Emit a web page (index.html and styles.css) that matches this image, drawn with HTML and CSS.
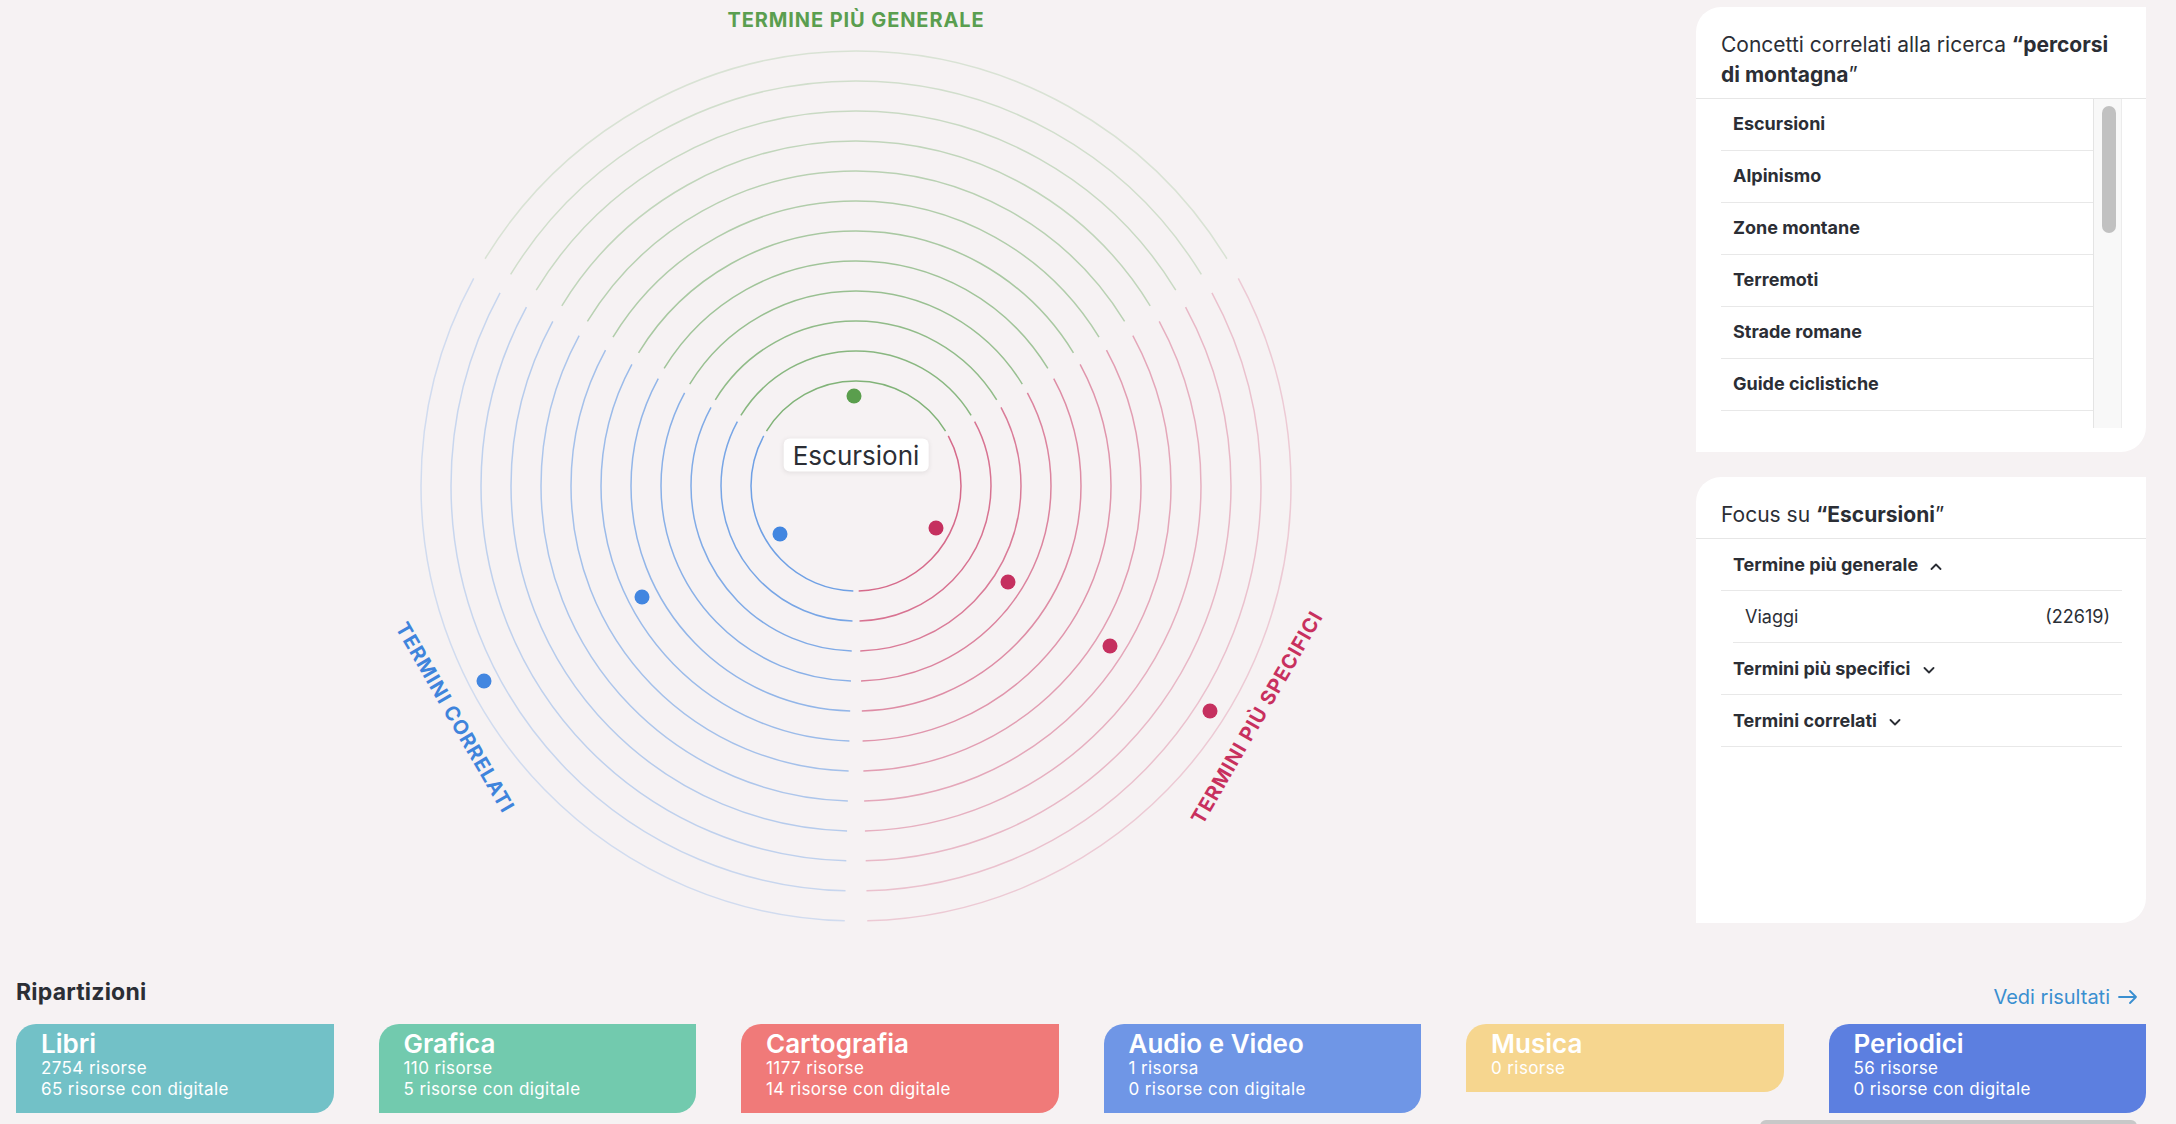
FILE: index.html
```html
<!DOCTYPE html>
<html lang="it">
<head>
    <meta charset="UTF-8">
    <meta name="viewport" content="width=device-width, initial-scale=1.0">
    <title>Esplora concetti</title>
    <link rel="stylesheet" href="styles.css">
</head>
<body>
    <main class="explorer">
        <div class="chart">
            <svg class="chart-svg" viewBox="-500 -486 1000 923" width="1000" height="923">
                <defs>
                    <radialGradient id="fadeGreen" gradientUnits="userSpaceOnUse" cx="0" cy="0" r="440">
                        <stop offset="0.24" stop-color="#5a9e4f" stop-opacity="0.75"/>
                        <stop offset="1" stop-color="#5a9e4f" stop-opacity="0.18"/>
                    </radialGradient>
                    <radialGradient id="fadeRed" gradientUnits="userSpaceOnUse" cx="0" cy="0" r="440">
                        <stop offset="0.24" stop-color="#c8305e" stop-opacity="0.7"/>
                        <stop offset="1" stop-color="#c8305e" stop-opacity="0.2"/>
                    </radialGradient>
                    <radialGradient id="fadeBlue" gradientUnits="userSpaceOnUse" cx="0" cy="0" r="440">
                        <stop offset="0.24" stop-color="#4285e0" stop-opacity="0.75"/>
                        <stop offset="1" stop-color="#4285e0" stop-opacity="0.2"/>
                    </radialGradient>
                </defs>

                <!-- termine più generale -->
                <g class="arcs arcs-green">
                    <circle r="105" pathLength="360"/>
                    <circle r="135" pathLength="360"/>
                    <circle r="165" pathLength="360"/>
                    <circle r="195" pathLength="360"/>
                    <circle r="225" pathLength="360"/>
                    <circle r="255" pathLength="360"/>
                    <circle r="285" pathLength="360"/>
                    <circle r="315" pathLength="360"/>
                    <circle r="345" pathLength="360"/>
                    <circle r="375" pathLength="360"/>
                    <circle r="405" pathLength="360"/>
                    <circle r="435" pathLength="360"/>
                </g>

                <!-- termini più specifici -->
                <g class="arcs arcs-red">
                    <circle r="105" pathLength="360"/>
                    <circle r="135" pathLength="360"/>
                    <circle r="165" pathLength="360"/>
                    <circle r="195" pathLength="360"/>
                    <circle r="225" pathLength="360"/>
                    <circle r="255" pathLength="360"/>
                    <circle r="285" pathLength="360"/>
                    <circle r="315" pathLength="360"/>
                    <circle r="345" pathLength="360"/>
                    <circle r="375" pathLength="360"/>
                    <circle r="405" pathLength="360"/>
                    <circle r="435" pathLength="360"/>
                </g>

                <!-- termini correlati -->
                <g class="arcs arcs-blue">
                    <circle r="105" pathLength="360"/>
                    <circle r="135" pathLength="360"/>
                    <circle r="165" pathLength="360"/>
                    <circle r="195" pathLength="360"/>
                    <circle r="225" pathLength="360"/>
                    <circle r="255" pathLength="360"/>
                    <circle r="285" pathLength="360"/>
                    <circle r="315" pathLength="360"/>
                    <circle r="345" pathLength="360"/>
                    <circle r="375" pathLength="360"/>
                    <circle r="405" pathLength="360"/>
                    <circle r="435" pathLength="360"/>
                </g>

                <g class="dots">
                    <circle class="dot-green" cx="-2" cy="-90" r="7.5"/>
                    <circle class="dot-blue" cx="-76" cy="48" r="7.5"/>
                    <circle class="dot-blue" cx="-214" cy="111" r="7.5"/>
                    <circle class="dot-blue" cx="-372" cy="195" r="7.5"/>
                    <circle class="dot-red" cx="80" cy="42" r="7.5"/>
                    <circle class="dot-red" cx="152" cy="96" r="7.5"/>
                    <circle class="dot-red" cx="254" cy="160" r="7.5"/>
                    <circle class="dot-red" cx="354" cy="225" r="7.5"/>
                </g>

                <text class="axis-label label-green" x="0" y="-459">TERMINE PIÙ GENERALE</text>
                <text class="axis-label label-blue" transform="rotate(-120) translate(0 -463) rotate(180)" y="7">TERMINI CORRELATI</text>
                <text class="axis-label label-red" transform="rotate(120) translate(0 -463) rotate(180)" y="7">TERMINI PIÙ SPECIFICI</text>
            </svg>

            <div class="focus-label">Escursioni</div>
        </div>

        <aside class="sidebar">
            <section class="panel">
                <h2 class="panel-title">Concetti correlati alla ricerca <strong>“percorsi di montagna</strong>”</h2>
                <div class="concept-scroll">
                    <ul class="concept-list">
                        <li>Escursioni</li>
                        <li>Alpinismo</li>
                        <li>Zone montane</li>
                        <li>Terremoti</li>
                        <li>Strade romane</li>
                        <li>Guide ciclistiche</li>
                        <li>Itinerari ciclabili</li>
                        <li>Rifugi alpini</li>
                        <li>Parchi naturali</li>
                        <li>Arrampicata</li>
                        <li>Trekking</li>
                        <li>Valli alpine</li>
                        <li>Ghiacciai</li>
                        <li>Cicloturismo</li>
                        <li>Geologia</li>
                        <li>Dolomiti</li>
                    </ul>
                    <div class="scroll-track"><div class="scroll-thumb"></div></div>
                </div>
            </section>

            <section class="panel panel-focus">
                <h2 class="panel-title">Focus su <strong>“Escursioni</strong>”</h2>
                <div class="focus-list">
                    <div class="focus-head">
                        Termine più generale
                        <svg class="chevron" viewBox="0 0 12 7" width="12" height="7"><polyline points="1.5,6 6,1.5 10.5,6"/></svg>
                    </div>
                    <div class="focus-item"><span>Viaggi</span><span>(22619)</span></div>
                    <div class="focus-head">
                        Termini più specifici
                        <svg class="chevron" viewBox="0 0 12 7" width="12" height="7"><polyline points="1.5,1 6,5.5 10.5,1"/></svg>
                    </div>
                    <div class="focus-head">
                        Termini correlati
                        <svg class="chevron" viewBox="0 0 12 7" width="12" height="7"><polyline points="1.5,1 6,5.5 10.5,1"/></svg>
                    </div>
                </div>
            </section>
        </aside>
    </main>

    <section class="breakdown">
        <div class="breakdown-head">
            <h3 class="breakdown-title">Ripartizioni</h3>
            <a class="results-link" href="#">
                Vedi risultati
                <svg viewBox="0 0 20 14" width="20" height="14"><path d="M1 7h17M12 1l6 6-6 6"/></svg>
            </a>
        </div>

        <div class="type-cards">
            <div class="type-card type-libri">
                <div class="type-name">Libri</div>
                <div class="type-count">2754 risorse</div>
                <div class="type-count">65 risorse con digitale</div>
            </div>
            <div class="type-card type-grafica">
                <div class="type-name">Grafica</div>
                <div class="type-count">110 risorse</div>
                <div class="type-count">5 risorse con digitale</div>
            </div>
            <div class="type-card type-carto">
                <div class="type-name">Cartografia</div>
                <div class="type-count">1177 risorse</div>
                <div class="type-count">14 risorse con digitale</div>
            </div>
            <div class="type-card type-audio">
                <div class="type-name">Audio e Video</div>
                <div class="type-count">1 risorsa</div>
                <div class="type-count">0 risorse con digitale</div>
            </div>
            <div class="type-card type-musica">
                <div class="type-name">Musica</div>
                <div class="type-count">0 risorse</div>
            </div>
            <div class="type-card type-periodici">
                <div class="type-name">Periodici</div>
                <div class="type-count">56 risorse</div>
                <div class="type-count">0 risorse con digitale</div>
            </div>
        </div>
    </section>

    <div class="page-scrollbar"></div>
</body>
</html>
```

FILE: styles.css
```css
* {
    margin: 0;
    padding: 0;
    box-sizing: border-box;
}

body {
    font-family: 'Inter', 'Noto Sans', sans-serif;
    background: #f6f2f3;
    color: #2b2e35;
    overflow: hidden;
}

/* Top area: chart + sidebar */
.explorer {
    display: grid;
    grid-template-columns: 1fr 450px;
    padding: 0 30px 0 16px;
}

.chart {
    position: relative;
    display: flex;
    justify-content: center;
}

.chart-svg {
    display: block;
}

.arcs circle {
    fill: none;
    stroke-width: 1.5;
    stroke-dasharray: 117 243;
}

.arcs-green circle {
    stroke: url(#fadeGreen);
    stroke-dashoffset: 148.5;
}

.arcs-red circle {
    stroke: url(#fadeRed);
    stroke-dashoffset: 28.5;
}

.arcs-blue circle {
    stroke: url(#fadeBlue);
    stroke-dashoffset: 268.5;
}

.dot-green { fill: #5a9e4d; }
.dot-blue { fill: #4286e0; }
.dot-red { fill: #c5305f; }

.axis-label {
    font-size: 20px;
    font-weight: 700;
    letter-spacing: 0.9px;
    text-anchor: middle;
}

.label-green { fill: #5a9e4f; }
.label-blue { fill: #3f84dc; }
.label-red { fill: #c8305e; }

.focus-label {
    position: absolute;
    left: 50%;
    top: 455px;
    transform: translate(-50%, -50%);
    background: #fff;
    border-radius: 6px;
    padding: 0 9px;
    font-size: 26px;
    line-height: 33px;
    color: #2b2e35;
    box-shadow: 0 1px 5px rgba(0, 0, 0, 0.08);
}

/* Sidebar */
.sidebar {
    display: flex;
    flex-direction: column;
    gap: 25px;
    padding-top: 7px;
}

.panel {
    background: #fff;
    border-radius: 25px 0 25px 0;
    padding-bottom: 24px;
}

.panel-focus {
    height: 446px;
}

.panel-title {
    font-size: 21px;
    font-weight: 400;
    line-height: 30px;
    padding: 23px 25px 8px;
    border-bottom: 1px solid #e6e6e6;
}

.panel-title strong {
    font-weight: 700;
}

.concept-scroll {
    display: flex;
    height: 329px;
    margin: 0 24px 0 25px;
}

.concept-list {
    flex: 1;
    list-style: none;
    overflow: hidden;
}

.concept-list li {
    padding: 0 12px 2px;
    font-size: 18px;
    font-weight: 700;
    line-height: 49px;
    border-bottom: 1px solid #e8e8e8;
}

.scroll-track {
    width: 29px;
    padding: 7px 5px 0 8px;
    background: #f8f8f8;
    border-left: 1px solid #e4e4e4;
    border-right: 1px solid #ececec;
}

.scroll-thumb {
    height: 127px;
    border-radius: 8px;
    background: #c1c1c1;
}

.focus-list {
    margin: 0 24px 0 25px;
}

.focus-head {
    padding: 0 12px;
    font-size: 18px;
    font-weight: 700;
    line-height: 51px;
    border-bottom: 1px solid #e8e8e8;
}

.chevron {
    margin-left: 8px;
    vertical-align: 1px;
    fill: none;
    stroke: #2b2e35;
    stroke-width: 1.8;
    stroke-linecap: round;
    stroke-linejoin: round;
}

.focus-item {
    display: flex;
    justify-content: space-between;
    margin-left: 12px;
    padding: 0 12px;
    font-size: 18px;
    line-height: 51px;
    border-bottom: 1px solid #e8e8e8;
}

/* Ripartizioni */
.breakdown {
    padding: 54px 30px 0 16px;
}

.breakdown-head {
    display: flex;
    justify-content: space-between;
    align-items: flex-start;
    margin-bottom: 12px;
}

.breakdown-title {
    font-size: 23px;
    font-weight: 700;
    letter-spacing: 0.2px;
    line-height: 30px;
}

.results-link {
    display: flex;
    align-items: center;
    gap: 8px;
    margin: 5px 8px 0 0;
    font-size: 20px;
    line-height: 30px;
    color: #3a8fd0;
    text-decoration: none;
}

.results-link svg {
    fill: none;
    stroke: currentColor;
    stroke-width: 1.8;
    stroke-linecap: round;
    stroke-linejoin: round;
}

.type-cards {
    display: grid;
    grid-template-columns: repeat(6, 1fr);
    gap: 45px;
    align-items: start;
}

.type-card {
    border-radius: 20px 0 20px 0;
    padding: 6px 25px 13px;
    color: #fff;
}

.type-name {
    font-size: 26px;
    font-weight: 600;
    line-height: 28px;
}

.type-count {
    font-size: 17px;
    letter-spacing: 0.4px;
    line-height: 21px;
}

.type-libri { background: #72c1c7; }
.type-grafica { background: #72caae; }
.type-carto { background: #f07a79; }
.type-audio { background: #6f96e6; }
.type-musica { background: #f6d68f; }
.type-periodici { background: #5c7fe0; }

/* cut-off scrollbar at the bottom edge */
.page-scrollbar {
    position: fixed;
    left: 1760px;
    top: 1120px;
    width: 377px;
    height: 12px;
    border-radius: 6px;
    background: #c8c8c8;
}
```
